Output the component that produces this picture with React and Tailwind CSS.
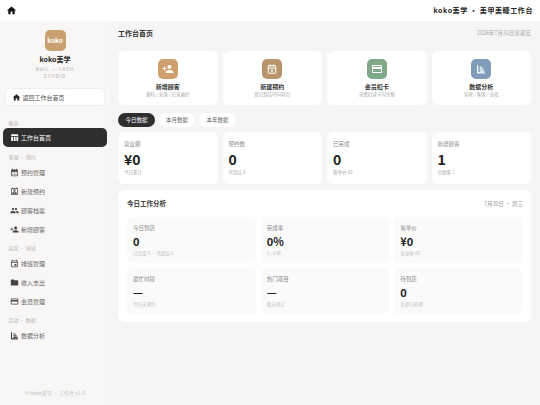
import { CalendarPlus2 } from "lucide-react";
import {
    MdHome,
    MdTableChart,
    MdCalendarMonth,
    MdOutlinePermContactCalendar,
    MdPeople,
    MdPersonAdd,
    MdOutlineEvent,
    MdFolder,
    MdCreditCard,
} from "react-icons/md";

// axis with bars, the package versions don't have this one
const ChartIcon = ({ size = 9, className }) => (
    <svg width={size} height={size} viewBox="0 0 24 24" fill="none" stroke="currentColor" strokeWidth="3" className={className}>
        <path d="M4 3v18h17" />
        <path d="M9 8h6M9 12.500h9M9 17h11" />
    </svg>
);

const quickCards = [
    { title: "新增顾客", sub: "建档 / 来源 / 记录偏好", color: "bg-[#cf9f6e]", icon: <MdPersonAdd size={12} className="text-white" /> },
    { title: "新建预约", sub: "登记到店时间项目", color: "bg-[#b8946a]", icon: <CalendarPlus2 size={10} strokeWidth={2.4} className="text-white" /> },
    { title: "会员扣卡", sub: "消费扣减卡内余额", color: "bg-[#7fa888]", icon: <MdCreditCard size={12} className="text-white" /> },
    { title: "数据分析", sub: "营收 / 客源 / 业绩", color: "bg-[#7f9db8]", icon: <ChartIcon size={10} className="text-white" /> },
];

const statCards = [
    { label: "营业额", value: "¥0", sub: "今日累计" },
    { label: "预约数", value: "0", sub: "待到店 0" },
    { label: "已完成", value: "0", sub: "客单价 ¥0" },
    { label: "新增顾客", value: "1", sub: "总顾客 1" },
];

const tiles = [
    { label: "今日到店", value: "0", sub: "已完成 0 · 待到店 0" },
    { label: "完成率", value: "0%", sub: "0 / 0 单" },
    { label: "客单价", value: "¥0", sub: "总营收 ¥0" },
    { label: "最忙时段", value: "—", sub: "今日无预约" },
    { label: "热门项目", value: "—", sub: "暂无预订" },
    { label: "待到店", value: "0", sub: "全部已处理" },
];

const NavItem = ({ icon: Icon, label }) => (
    <div className="flex items-center gap-[2px] h-[19px] pl-[7px] text-[6px] text-[#666]">
        <Icon size={8} className="text-[#444] shrink-0 w-[9px] h-[9px]" />
        <span>{label}</span>
    </div>
);

const GroupTitle = ({ children, className }) => (
    <div className={`pl-[5.5px] text-[5px] leading-[7px] text-[#b5b5b5] ${className}`}>{children}</div>
);

const Sidebar = () => (
    <aside className="w-[110px] shrink-0 bg-[#f8f7f5] flex flex-col px-[3px] pb-[9px]">
        <div className="flex flex-col items-center pt-[9px]">
            <div className="w-[21px] h-[21px] rounded-[5px] bg-[#c9a06f] flex items-center justify-center text-white text-[6.5px] font-bold">
                koko
            </div>
            <div className="mt-[3px] text-[7px] leading-[10px] font-bold text-[#222]">koko美学</div>
            <div className="mt-[2px] w-[50px] text-center text-[4.5px] leading-[6.5px] tracking-[1px] text-[#a5a5a5]">
                NAIL · LASH STUDIO
            </div>
        </div>
        <div className="mt-[9px] mx-[2px] h-[18px] rounded-[5px] bg-white border border-[#eeeeee] flex items-center gap-[1.5px] px-[6px] text-[6px] text-[#555]">
            <MdHome size={8} className="text-[#222] w-[9px] h-[9px]" />
            <span>返回工作台首页</span>
        </div>
        <GroupTitle className="mt-[12.5px]">概览</GroupTitle>
        <div className="mt-[2.5px] h-[19px] rounded-[5px] bg-[#2f2f2f] flex items-center gap-[2px] pl-[7px] text-[6px] text-white">
            <MdTableChart size={9} className="w-[9px] h-[9px]" />
            <span>工作台首页</span>
        </div>
        <GroupTitle className="mt-[5.5px] mb-[3px]">客源 · 预约</GroupTitle>
        <NavItem icon={MdCalendarMonth} label="预约管理" />
        <NavItem icon={MdOutlinePermContactCalendar} label="新建预约" />
        <NavItem icon={MdPeople} label="顾客档案" />
        <NavItem icon={MdPersonAdd} label="新增顾客" />
        <GroupTitle className="mt-[5px] mb-[3.5px]">运营 · 排班</GroupTitle>
        <NavItem icon={MdOutlineEvent} label="排班管理" />
        <NavItem icon={MdFolder} label="收入支出" />
        <NavItem icon={MdCreditCard} label="会员管理" />
        <GroupTitle className="mt-[4.5px] mb-[3px]">活动 · 数据</GroupTitle>
        <NavItem icon={ChartIcon} label="数据分析" />
        <div className="mt-auto text-center text-[5px] text-[#c0c0c0]">© koko美学 · 工作台 v1.0</div>
    </aside>
);

export default function App() {
    return (
        <div className="w-[540px] h-[405px] overflow-hidden flex flex-col bg-[#f5f5f5] font-['Noto_Sans_CJK_SC','Noto_Sans',sans-serif]">
            <header className="h-[21px] shrink-0 bg-white flex items-center justify-between pl-[6px] pr-[7px]">
                <MdHome size={11} className="text-[#111]" />
                <div className="text-[7px] font-bold tracking-[0.6px] text-[#222]">koko美学 · 美甲美睫工作台</div>
            </header>
            <div className="flex flex-1 min-h-0">
                <Sidebar />
                <main className="flex-1 pl-[8px] pr-[9px] pt-[6px]">
                    <div className="flex items-center justify-between h-[12px]">
                        <div className="text-[7px] font-bold text-[#333]">工作台首页</div>
                        <div className="text-[5.5px] text-[#aaa]">2026年7月31日星期五</div>
                    </div>
                    <div className="mt-[12px] grid grid-cols-4 gap-[5px]">
                        {quickCards.map((c) => (
                            <div key={c.title} className="h-[54px] rounded-[6px] bg-white flex flex-col items-center pt-[8px]">
                                <div className={`w-[20px] h-[20px] rounded-[5px] ${c.color} flex items-center justify-center`}>
                                    {c.icon}
                                </div>
                                <div className="mt-[3.5px] text-[6px] leading-[8px] font-bold text-[#333]">{c.title}</div>
                                <div className="text-[4.5px] leading-[6px] text-[#aaa]">{c.sub}</div>
                            </div>
                        ))}
                    </div>
                    <div className="mt-[8px] flex gap-[4px] text-[5.5px]">
                        <div className="w-[37px] h-[14px] rounded-full bg-[#2f2f2f] text-white flex items-center justify-center">今日数据</div>
                        <div className="w-[36px] h-[14px] rounded-full bg-white text-[#666] flex items-center justify-center">本月数据</div>
                        <div className="w-[37px] h-[14px] rounded-full bg-white text-[#666] flex items-center justify-center">本年数据</div>
                    </div>
                    <div className="mt-[5px] grid grid-cols-4 gap-[5px]">
                        {statCards.map((c) => (
                            <div key={c.label} className="h-[52px] rounded-[6px] bg-white px-[6px] pt-[8.5px]">
                                <div className="text-[5.5px] leading-[7px] text-[#888]">{c.label}</div>
                                <div className="mt-[3.5px] text-[14px] leading-[16px] font-bold text-[#222]">{c.value}</div>
                                <div className="mt-[2px] text-[4.5px] leading-[6px] text-[#aaa]">{c.sub}</div>
                            </div>
                        ))}
                    </div>
                    <section className="mt-[6px] h-[132px] rounded-[7px] bg-white pl-[9px] pr-[8px] pt-[9px]">
                        <div className="flex items-center justify-between h-[10px]">
                            <div className="text-[6.5px] font-bold text-[#333]">今日工作分析</div>
                            <div className="text-[5.5px] text-[#999]">7月30日 · 周三</div>
                        </div>
                        <div className="mt-[8px] grid grid-cols-3 gap-[5px]">
                            {tiles.map((t) => (
                                <div key={t.label} className="h-[46px] rounded-[5px] bg-[#fafafa] px-[6px] pt-[7.5px]">
                                    <div className="text-[5.5px] leading-[7px] text-[#888]">{t.label}</div>
                                    <div className="mt-[3px] text-[11px] leading-[13px] font-bold text-[#222]">{t.value}</div>
                                    <div className="mt-[2px] text-[4.5px] leading-[6px] text-[#bbb]">{t.sub}</div>
                                </div>
                            ))}
                        </div>
                    </section>
                </main>
            </div>
        </div>
    );
}
